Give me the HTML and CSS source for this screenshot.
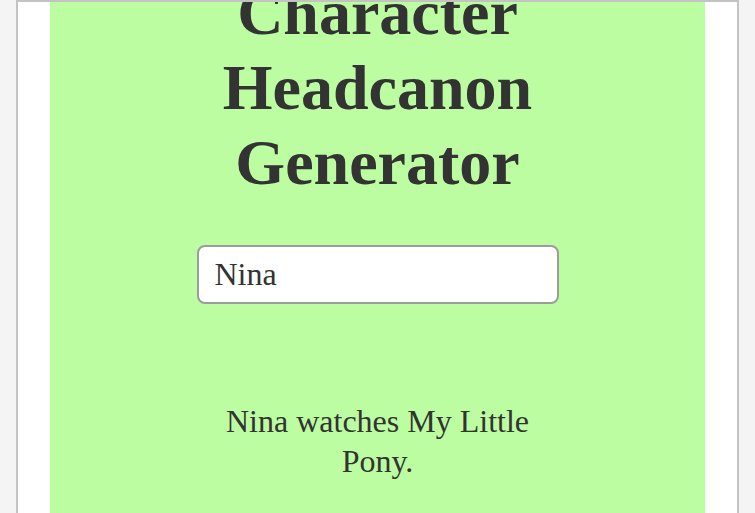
FILE: index.html
```html
<!DOCTYPE html>
<html lang="en">
<head>
  <meta charset="UTF-8" />
  <meta name="viewport" content="width=device-width, initial-scale=1.0" />
  <title>Character Headcanon Generator</title>
  <link rel="stylesheet" href="styles.css">
</head>
<body>
  <div class="frame">
    <div class="panel">
      <h1>Character Headcanon Generator</h1>
      <input type="text" class="name-input" value="Nina" />
      <p class="result">Nina watches My Little Pony.</p>
    </div>
  </div>
</body>
</html>
```

FILE: styles.css
```css
html, body {
  margin: 0;
  height: 100%;
  overflow: hidden;
}
body {
  background: #f4f4f4;
  font-family: "Liberation Serif", "Times New Roman", serif;
  color: #333;
}
.frame {
  box-sizing: border-box;
  height: 100vh;
  margin: 0 16px;
  padding: 0 32px;
  background: #fff;
  border: 2px solid #c3c3c3;
  border-bottom: 0;
  overflow: hidden;
}
.panel {
  margin-top: -27px;
  min-height: 700px;
  background: #bbfda0;
  text-align: center;
}
h1 {
  max-width: 360px;
  margin: 0 auto;
  font-size: 64px;
  line-height: 75px;
  font-weight: bold;
}
.name-input {
  box-sizing: border-box;
  display: block;
  width: 362px;
  margin: 45px auto 0;
  padding: 9px 16px;
  font-family: inherit;
  font-size: 32px;
  color: #333;
  background: #fff;
  border: 2px solid #9c9c9c;
  border-radius: 8px;
  outline: none;
}
.result {
  max-width: 360px;
  margin: 97px auto 0;
  font-size: 32px;
  line-height: 40px;
}
```
